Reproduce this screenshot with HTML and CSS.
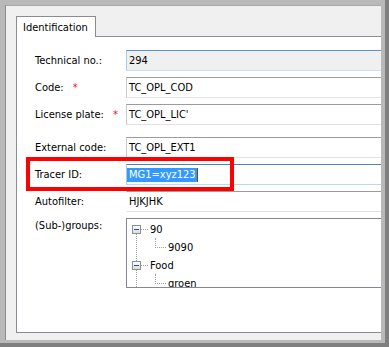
FILE: index.html
```html
<!DOCTYPE html>
<html lang="en">
<head>
<meta charset="UTF-8" />
<title>Identification</title>
<link rel="stylesheet" href="styles.css">
</head>
<body>
  <div class="frame">
    <div class="window">
      <div class="tabstrip">
        <div class="tab">Identification</div>
        <div class="tab-fill"></div>
      </div>

      <div class="panel">
        <div class="form">
          <div class="lbl">Technical no.:</div>
          <div class="field field-ro">294</div>

          <div class="lbl">Code: <span class="req">*</span></div>
          <div class="field">TC_OPL_COD</div>

          <div class="lbl">License plate: <span class="req">*</span></div>
          <div class="field">TC_OPL_LIC'</div>

          <div class="lbl spaced">External code:</div>
          <div class="field spaced">TC_OPL_EXT1</div>

          <div class="lbl">Tracer ID:</div>
          <div class="field field-focus"><span class="sel">MG1=xyz123</span><span class="caret"></span></div>

          <div class="lbl">Autofilter:</div>
          <div class="field field-flat">HJKJHK</div>

          <div class="lbl lbl-top">(Sub-)groups:</div>
          <div class="tree">
            <div class="tree-root">
              <div class="node"><span class="exp"></span><span class="dash"></span><span>90</span></div>
              <div class="children">
                <div class="leaf"><span class="elbow"></span><span>9090</span></div>
              </div>
              <div class="node"><span class="exp"></span><span class="dash"></span><span>Food</span></div>
              <div class="children">
                <div class="leaf"><span class="elbow"></span><span>groen</span></div>
              </div>
            </div>
          </div>

          <!-- annotation drawn over the screenshot -->
          <div class="mark"></div>
        </div>
      </div>
    </div>
  </div>
</body>
</html>
```

FILE: styles.css
```css
body { margin: 0; font-family: "DejaVu Sans Condensed", "DejaVu Sans", sans-serif; font-size: 11px; color: #000; }

.frame { width: 389px; height: 347px; box-sizing: border-box; background: #b9b9b9; padding: 5px 8px 7px 5px; box-shadow: inset -4px -4px 0 #7f7f7f; }
.window { height: 100%; box-sizing: border-box; background: #f0f0f0; border-left: 1px solid #8a8a8a; border-top: 1px solid #a8a8a8; padding: 10px 0 7px 10px; overflow: hidden; display: flex; flex-direction: column; }

.tabstrip { display: flex; height: 21px; flex: none; }
.tab { box-sizing: border-box; height: 21px; background: #fff; border: 1px solid #898c95; border-bottom: none; padding: 3px 7px 0 6px; line-height: 15px; }
.tab-fill { flex: none; width: 400px; box-sizing: border-box; height: 21px; border-bottom: 1px solid #898c95; }

.panel { flex: 1; width: 400px; background: #fff; border: 1px solid #898c95; border-top: none; }
.form { position: relative; display: grid; grid-template-columns: 91px 1fr; row-gap: 6px; padding: 13px 0 0 18px; }

.lbl { align-self: center; white-space: nowrap; }
.lbl-top { align-self: start; margin-top: 1px; }
.req { color: #e8141e; margin-left: 6px; }
.spaced { margin-top: 6px; }

.field { box-sizing: border-box; height: 21px; line-height: 19px; padding-left: 2px; border: 1px solid; border-color: #9c9c9c #d0d0d0 #e3e3e3 #c9c9c9; white-space: nowrap; }
.field-ro { background: #f0f0f0; border-color: #5b93c6 #a9c9e4 #c7e2f1 #a9c9e4; }
.field-focus { padding-left: 0; border-color: #4a86b8 #a9c9e4 #b8d8ec #a9c9e4; display: flex; align-items: center; }
.field-flat { border-left-color: #fff; }
.sel { background: #3399ff; color: #fff; line-height: 14px; padding: 0 1px 0 2px; }
.caret { width: 1px; height: 14px; background: #6b4a1c; }

.tree { box-sizing: border-box; height: 70px; border: 1px solid #828790; padding: 1px 0 0 5px; overflow: hidden; }
.tree-root { background: repeating-linear-gradient(to bottom, #a0a0a0 0 1px, transparent 1px 2px) 4px 14px / 1px 100% no-repeat; }
.node, .leaf { display: flex; align-items: center; height: 18px; }
.exp { box-sizing: border-box; width: 9px; height: 9px; border: 1px solid #8e8f8f; background: linear-gradient(#fff, #dcdcdc); display: flex; align-items: center; justify-content: center; }
.exp::before { content: ""; width: 5px; height: 1px; background: #2d4b93; }
.dash { width: 8px; height: 1px; margin-right: 1px; background: repeating-linear-gradient(to right, #a0a0a0 0 1px, transparent 1px 2px); }
.children { margin-left: 23px; }
.elbow { align-self: flex-start; box-sizing: border-box; width: 11px; height: 10px; margin-right: 2px; border-left: 1px dotted #a0a0a0; border-bottom: 1px dotted #a0a0a0; }

.mark { position: absolute; left: 9px; top: 120px; width: 208px; height: 34px; box-sizing: border-box; border: 4px solid #f00; }
```
